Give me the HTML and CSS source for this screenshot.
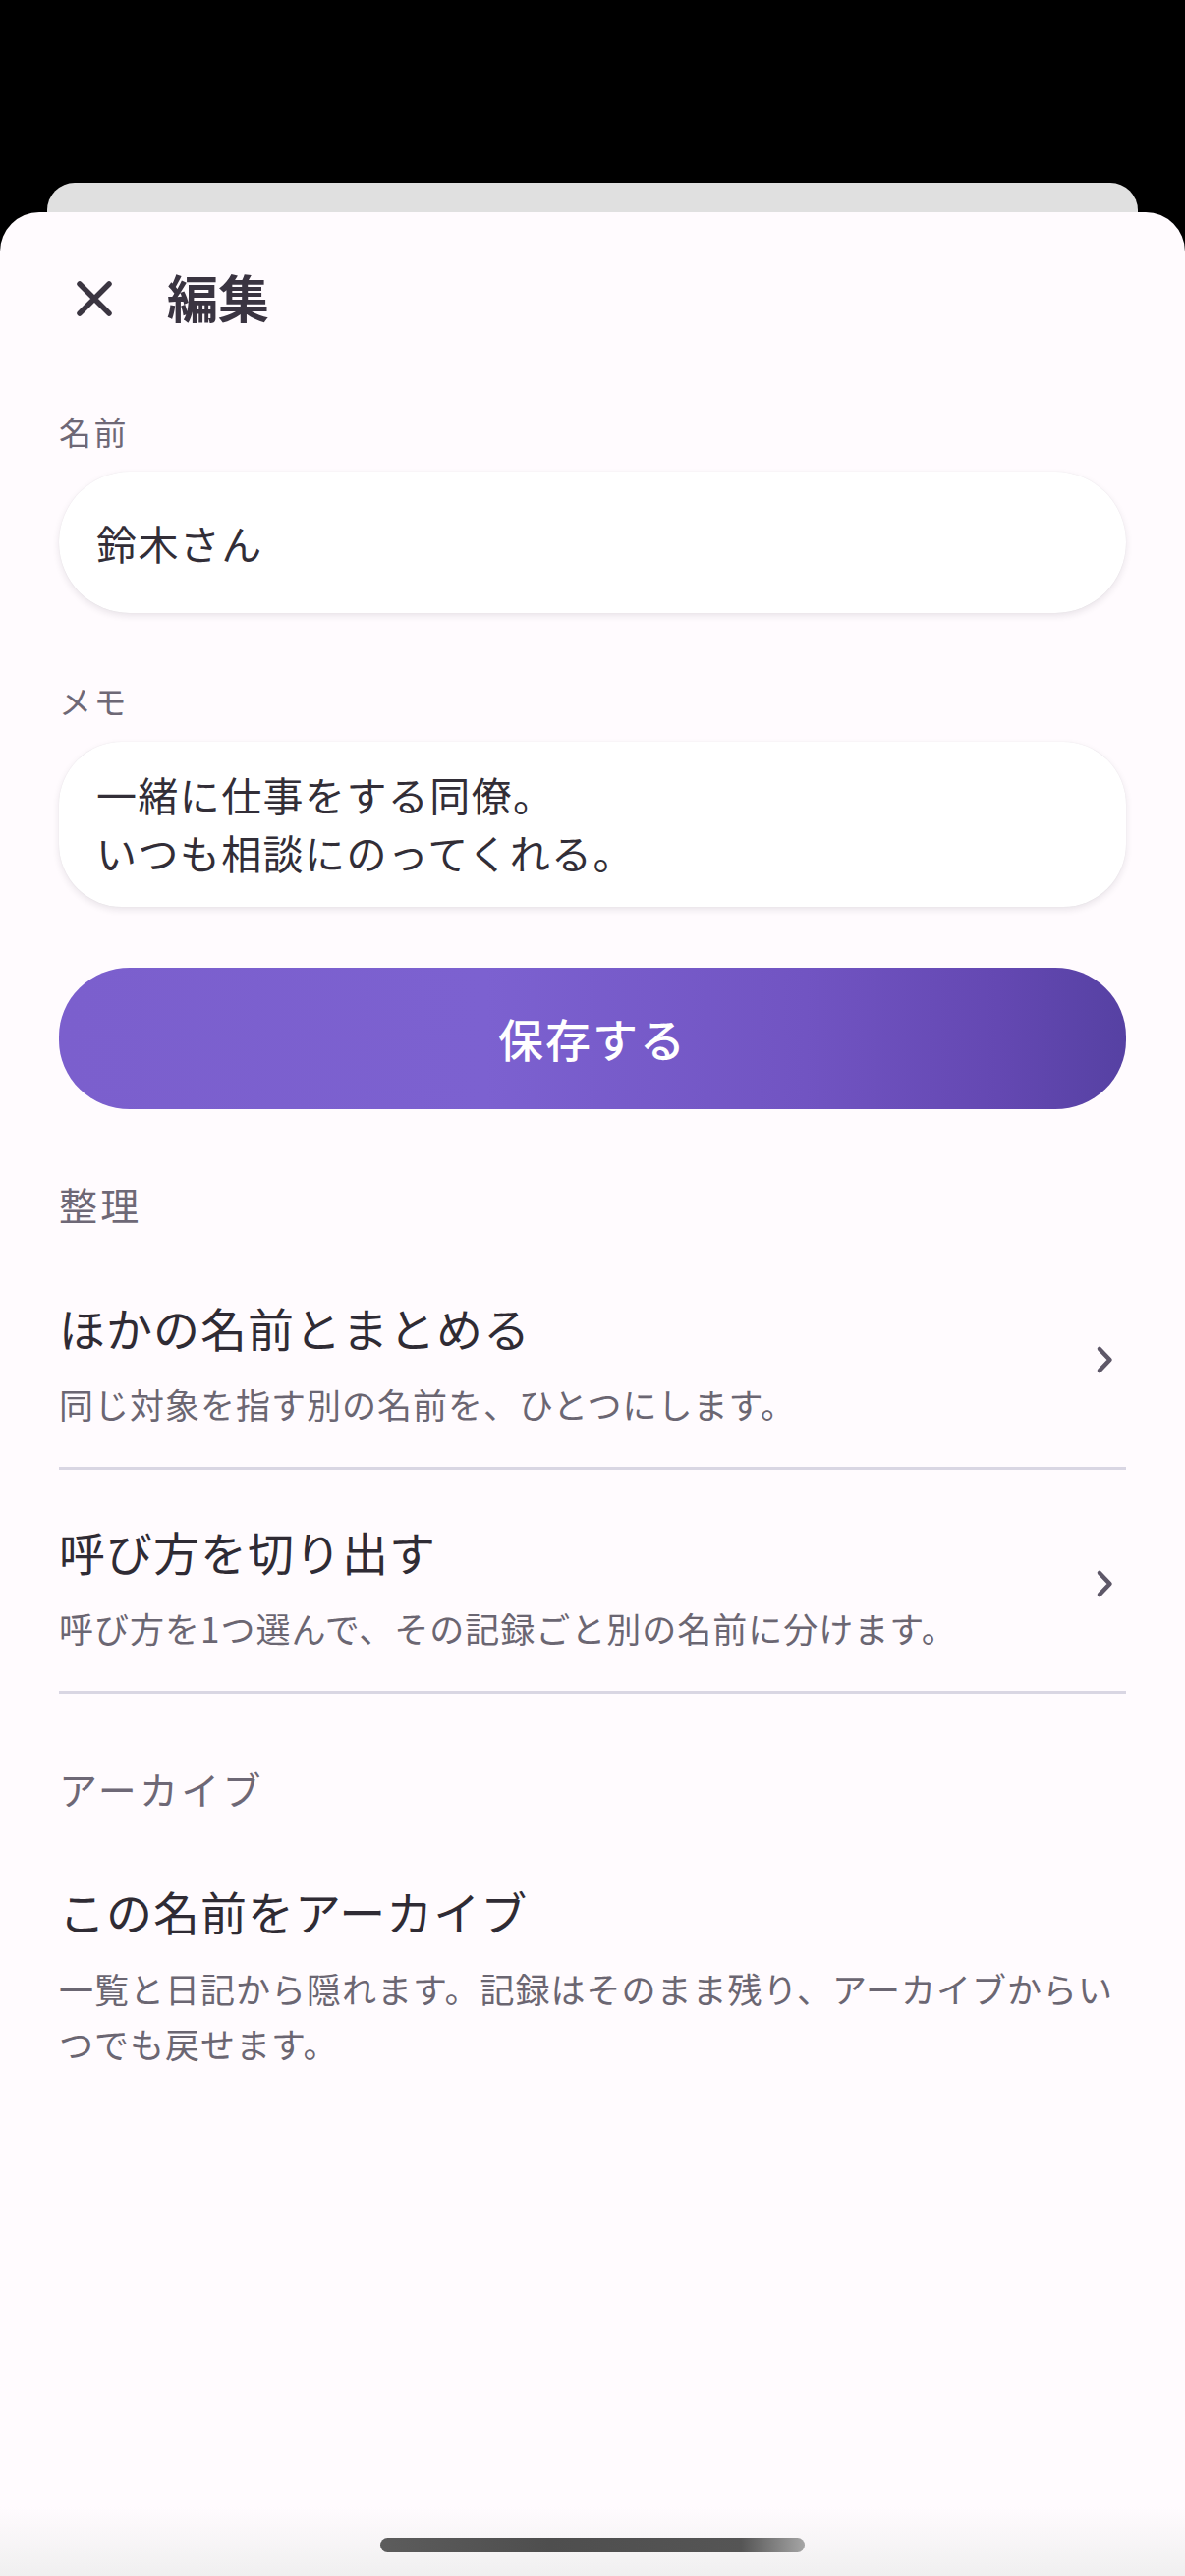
FILE: index.html
```html
<!DOCTYPE html>
<html lang="ja">
<head>
<meta charset="utf-8">
<title>編集</title>
<link rel="stylesheet" href="styles.css">
</head>
<body>
<div class="screen">
  <div class="status-area"></div>
  <div class="back-card"></div>
  <div class="sheet">
    <header class="sheet-header">
      <svg class="close-icon" viewBox="0 0 40 40" width="40" height="40" aria-hidden="true">
        <path d="M5 5 L35 35 M35 5 L5 35" stroke="#3b3541" stroke-width="5.5" stroke-linecap="round" fill="none"/>
      </svg>
      <h1 class="sheet-title">編集</h1>
    </header>

    <label class="field-label label-name">名前</label>
    <div class="field field-name">鈴木さん</div>

    <label class="field-label label-memo">メモ</label>
    <div class="field field-memo">一緒に仕事をする同僚。<br>いつも相談にのってくれる。</div>

    <button class="save-button">保存する</button>

    <div class="section-label section-organize">整理</div>
    <div class="list-item">
      <div class="item-text">
        <div class="item-title">ほかの名前とまとめる</div>
        <div class="item-sub">同じ対象を指す別の名前を、ひとつにします。</div>
      </div>
      <svg class="chevron" viewBox="0 0 24 32" width="24" height="32" aria-hidden="true">
        <path d="M8 5 L18.5 16 L8 27" stroke="#5e5768" stroke-width="4.5" stroke-linecap="round" stroke-linejoin="round" fill="none"/>
      </svg>
    </div>
    <div class="list-item">
      <div class="item-text">
        <div class="item-title">呼び方を切り出す</div>
        <div class="item-sub">呼び方を1つ選んで、その記録ごと別の名前に分けます。</div>
      </div>
      <svg class="chevron" viewBox="0 0 24 32" width="24" height="32" aria-hidden="true">
        <path d="M8 5 L18.5 16 L8 27" stroke="#5e5768" stroke-width="4.5" stroke-linecap="round" stroke-linejoin="round" fill="none"/>
      </svg>
    </div>

    <div class="section-label section-archive">アーカイブ</div>
    <div class="archive-item">
      <div class="item-title">この名前をアーカイブ</div>
      <div class="item-sub archive-sub">一覧と日記から隠れます。記録はそのまま残り、アーカイブからいつでも戻せます。</div>
    </div>
  </div>
  <div class="nav-fade"></div>
  <div class="home-indicator"></div>
</div>
</body>
</html>
```

FILE: styles.css
```css
* {
  box-sizing: border-box;
}

html, body {
  margin: 0;
  padding: 0;
  background: #000;
}

body {
  font-family: "Noto Sans CJK JP", "Noto Sans", sans-serif;
  color: #322e37;
}

.screen {
  position: relative;
  width: 1206px;
  height: 2622px;
  overflow: hidden;
  background: #000;
  display: flex;
  flex-direction: column;
}

.status-area {
  height: 186px;
  flex: none;
}

.back-card {
  height: 30px;
  margin: 0 48px;
  background: #e0e0e0;
  border-radius: 28px 28px 0 0;
  flex: none;
}

.sheet {
  flex: 1;
  background: #fffbfe;
  border-radius: 40px 40px 0 0;
  padding: 0 60px;
  display: flex;
  flex-direction: column;
}

.sheet-header {
  display: flex;
  align-items: center;
  height: 70px;
  margin-top: 51px;
}

.close-icon {
  margin-left: 16px;
  margin-top: 4px;
  flex: none;
}

.sheet-title {
  margin: 0 0 0 54px;
  font-size: 52px;
  line-height: 70px;
  font-weight: 700;
  color: #3a3441;
}

.field-label {
  display: block;
  font-size: 33px;
  letter-spacing: 2.4px;
  line-height: 44px;
  color: #6e6876;
}

.label-name {
  margin-top: 80px;
}

.label-memo {
  margin-top: 67px;
}

.field {
  background: #ffffff;
  box-shadow: 0 3px 7px rgba(40, 30, 50, 0.10), 0 0 1px rgba(40, 30, 50, 0.10);
  color: #322e37;
  font-size: 41px;
  letter-spacing: 1.4px;
  padding-left: 38px;
}

.field-name {
  margin-top: 19px;
  height: 144px;
  border-radius: 72px;
  display: flex;
  align-items: center;
  line-height: 60px;
}

.field-memo {
  margin-top: 20px;
  height: 168px;
  border-radius: 64px;
  padding-top: 24px;
  line-height: 59px;
}

.save-button {
  margin-top: 62px;
  height: 144px;
  border: none;
  border-radius: 72px / 70px;
  background: linear-gradient(90deg, #7b5fcd 0%, #7c61d0 40%, #7154c2 70%, #6448b2 88%, #5641a3 100%);
  color: #ffffff;
  font-family: "Noto Sans CJK JP", "Noto Sans", sans-serif;
  font-size: 46px;
  letter-spacing: 2px;
  font-weight: 500;
  padding: 0 0 2px;
  width: 100%;
}

.section-label {
  font-size: 39px;
  letter-spacing: 3.2px;
  line-height: 50px;
  color: #6e6876;
}

.section-organize {
  margin-top: 71px;
  margin-bottom: 18px;
}

.section-archive {
  margin-top: 71px;
  margin-bottom: 17px;
}

.list-item {
  display: flex;
  align-items: center;
  padding: 50px 0 37px;
  border-bottom: 3px solid #d9d6e3;
}

.item-text {
  flex: 1;
  min-width: 0;
}

.item-title {
  font-size: 47px;
  letter-spacing: 1px;
  line-height: 66px;
  color: #2f2b34;
}

.item-sub {
  margin-top: 18px;
  font-size: 35px;
  letter-spacing: 1px;
  line-height: 54px;
  color: #6b6672;
}

.chevron {
  flex: none;
  margin-right: 11px;
  margin-bottom: 7px;
}

.archive-item {
  padding-top: 50px;
}

.archive-sub {
  line-height: 56px;
}

.nav-fade {
  position: absolute;
  left: 0;
  right: 0;
  bottom: 0;
  height: 70px;
  background: linear-gradient(180deg, rgba(240, 240, 240, 0) 0%, rgba(238, 238, 238, 0.9) 100%);
  pointer-events: none;
}

.home-indicator {
  position: absolute;
  left: 387px;
  width: 432px;
  bottom: 24px;
  height: 15px;
  border-radius: 8px;
  background: linear-gradient(90deg, #5c5c5c 0%, #4e4e4e 40%, #555555 85%, #a5a5a5 100%);
}
```
